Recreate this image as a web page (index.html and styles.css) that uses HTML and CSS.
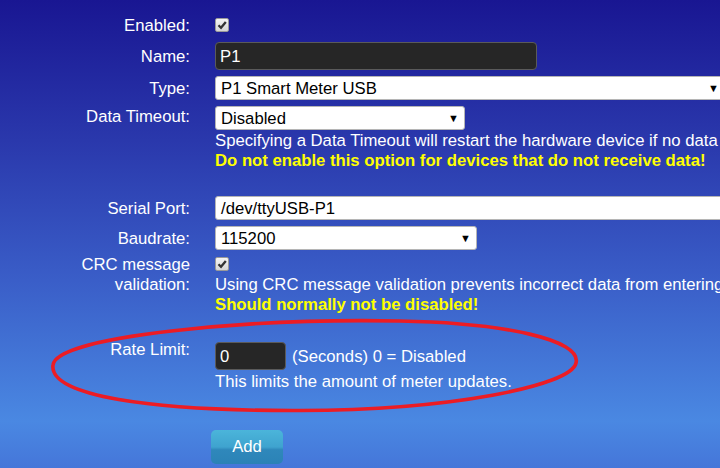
FILE: index.html
```html
<!DOCTYPE html>
<html lang="en">
<head>
    <meta charset="UTF-8">
    <title>Add Hardware</title>
    <link rel="stylesheet" href="styles.css">
</head>
<body>
    <div class="page">
        <div class="hwform">
            <div class="row r-enabled">
                <div class="lbl">Enabled:</div>
                <div class="val"><span class="chk"><svg width="12" height="12" viewBox="0 0 12 12"><path d="M2.5 6.3 L5 8.8 L9.8 3" fill="none" stroke="#333" stroke-width="2.3"/></svg></span></div>
            </div>
            <div class="row r-name">
                <div class="lbl">Name:</div>
                <div class="val"><div class="txt dark name">P1</div></div>
            </div>
            <div class="row r-sel">
                <div class="lbl">Type:</div>
                <div class="val"><div class="sel type"><span>P1 Smart Meter USB</span><span class="arrow">&#9660;</span></div></div>
            </div>
            <div class="row r-timeout">
                <div class="lbl">Data Timeout:</div>
                <div class="val">
                    <div class="sel timeout"><span>Disabled</span><span class="arrow">&#9660;</span></div>
                    <div class="note">Specifying a Data Timeout will restart the hardware device if no data is received</div>
                    <div class="warn">Do not enable this option for devices that do not receive data!</div>
                </div>
            </div>
            <div class="row r-sel r-serial">
                <div class="lbl">Serial Port:</div>
                <div class="val"><div class="txt serial">/dev/ttyUSB-P1</div></div>
            </div>
            <div class="row r-sel">
                <div class="lbl">Baudrate:</div>
                <div class="val"><div class="sel baud"><span>115200</span><span class="arrow">&#9660;</span></div></div>
            </div>
            <div class="row r-crc">
                <div class="lbl">CRC message validation:</div>
                <div class="val">
                    <div class="chkline"><span class="chk"><svg width="12" height="12" viewBox="0 0 12 12"><path d="M2.5 6.3 L5 8.8 L9.8 3" fill="none" stroke="#333" stroke-width="2.3"/></svg></span></div>
                    <div class="note">Using CRC message validation prevents incorrect data from entering the system</div>
                    <div class="warn">Should normally not be disabled!</div>
                </div>
            </div>
            <div class="row r-rate">
                <div class="lbl">Rate Limit:</div>
                <div class="val">
                    <div class="rateline"><div class="txt dark rate">0</div><span>(Seconds) 0 = Disabled</span></div>
                    <div class="note">This limits the amount of meter updates.</div>
                </div>
            </div>
            <div class="row r-btn">
                <div class="lbl"></div>
                <div class="val"><div class="btn">Add</div></div>
            </div>
        </div>
        <svg class="circle" width="720" height="468" viewBox="0 0 720 468">
            <path d="M53 365 C56 336, 250 318, 400 321 C505 323, 582 340, 576 363 C571 386, 450 410, 300 410.5 C150 411, 49 396, 53 365 Z" fill="none" stroke="#ec1c24" stroke-width="3.6"/>
        </svg>
    </div>
</body>
</html>
```

FILE: styles.css
```css
body{
    margin: 0;
    overflow: hidden;
}
.page{
    position: relative;
    width: 720px;
    height: 468px;
    overflow: hidden;
    background: linear-gradient(to bottom, #191692 0%, #2a38ac 30%, #3a5ec8 60%, #4a88e2 90%, #4576d9 100%);
    font-family: "Liberation Sans", Arial, sans-serif;
    font-size: 16.7px;
    line-height: 20px;
    color: #fff;
}
.hwform{
    padding-top: 15px;
    display: flex;
    flex-direction: column;
    gap: 6px;
}
.row{
    display: grid;
    grid-template-columns: 130px 1fr;
    column-gap: 25px;
    padding-left: 60px;
    align-items: start;
}
.lbl{
    text-align: right;
    padding-top: 1px;
}
.val{
    white-space: nowrap;
}
.r-name .lbl{ padding-top: 5px; }
.r-sel .lbl{ padding-top: 3px; }
.r-serial{ margin-top: 20px; }
.r-crc{ margin-top: -2px; }
.r-rate{ margin-top: 19px; }
.r-btn{ margin-top: 33px; }
.r-btn .val{ margin-left: -4px; }

.chk{
    display: inline-block;
    box-sizing: border-box;
    width: 14px;
    height: 14px;
    margin-top: 3px;
    background: linear-gradient(#f4f4f4, #d6d6d6);
    border: 1px solid #9a9a9a;
    border-radius: 2px;
    vertical-align: top;
}
.chk svg{
    display: block;
}
.chkline{
    height: 20px;
}
.txt, .sel{
    box-sizing: border-box;
    color: #000;
    background: #fff;
    border: 1px solid #b5b5b5;
    border-radius: 3px;
    height: 24px;
    line-height: 23px;
    padding: 0 5px;
}
.dark{
    background: #262626;
    color: #fff;
    border: 1px solid #5a5a5a;
    border-radius: 4px;
}
.name{
    width: 322px;
    height: 28px;
    line-height: 27px;
    padding-left: 4px;
}
.serial{
    width: 520px;
}
.sel{
    display: flex;
    justify-content: space-between;
    align-items: center;
}
.arrow{
    font-size: 11px;
    color: #000;
}
.type{ width: 510px; }
.timeout{ width: 250px; }
.baud{ width: 262px; }
.note, .warn{
    height: 20px;
    line-height: 21px;
}
.warn{
    color: #ffff00;
    font-weight: bold;
}
.rateline{
    display: flex;
    align-items: center;
    gap: 6px;
    height: 32px;
    padding-top: 2px;
    box-sizing: border-box;
}
.rate{
    width: 71px;
    height: 28px;
    line-height: 28px;
    padding-left: 4px;
}
.rateline span{
    padding-top: 1px;
}
.btn{
    width: 72px;
    height: 34px;
    line-height: 34px;
    text-align: center;
    border-radius: 5px;
    background: linear-gradient(to bottom, #4bb5da 0%, #3fa3cf 50%, #2f88bb 58%, #2b82b6 100%);
    color: #fff;
}
.circle{
    position: absolute;
    left: 0;
    top: 0;
    pointer-events: none;
}
```
